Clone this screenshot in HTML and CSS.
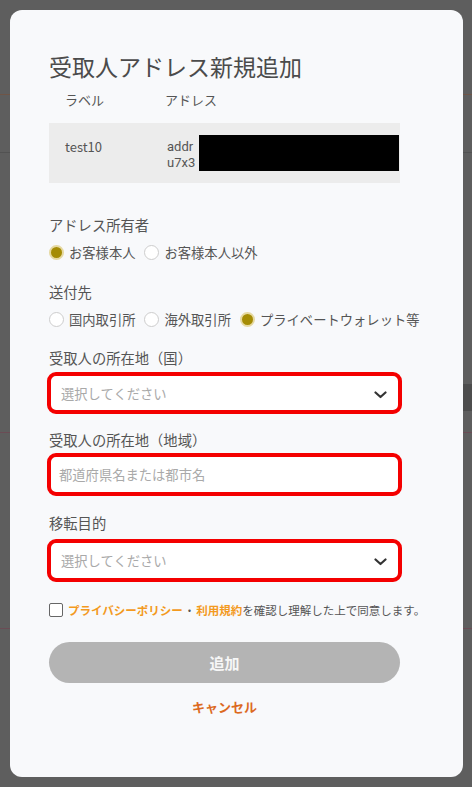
FILE: index.html
```html
<!DOCTYPE html>
<html lang="ja">
<head>
<meta charset="utf-8">
<title>受取人アドレス新規追加</title>
<link rel="stylesheet" href="styles.css">
</head>
<body>
<div class="overlay">
  <div class="modal">
    <h1 class="title">受取人アドレス新規追加</h1>
    <div class="addr-table">
      <div class="addr-head">
        <span class="col-label">ラベル</span>
        <span class="col-addr">アドレス</span>
      </div>
      <div class="addr-row">
        <span class="col-label">test10</span>
        <span class="col-addr addr-val">addr<br>u7x3</span>
        <span class="redact"></span>
      </div>
    </div>

    <div class="field-label sec-owner">アドレス所有者</div>
    <div class="radio-row">
      <label class="radio"><span class="radio-dot on"></span>お客様本人</label>
      <label class="radio"><span class="radio-dot"></span>お客様本人以外</label>
    </div>

    <div class="field-label sec-dest">送付先</div>
    <div class="radio-row">
      <label class="radio"><span class="radio-dot"></span>国内取引所</label>
      <label class="radio"><span class="radio-dot"></span>海外取引所</label>
      <label class="radio"><span class="radio-dot on"></span>プライベートウォレット等</label>
    </div>

    <div class="field-label sec-country">受取人の所在地（国）</div>
    <div class="select h42">
      <span>選択してください</span>
      <svg class="chev" width="13" height="8" viewBox="0 0 13 8"><path d="M1.5 1.5 L6.5 6 L11.5 1.5" fill="none" stroke="#333" stroke-width="2.2" stroke-linecap="round" stroke-linejoin="round"/></svg>
    </div>

    <div class="field-label sec-region">受取人の所在地（地域）</div>
    <div class="select input h43">
      <span>都道府県名または都市名</span>
    </div>

    <div class="field-label sec-purpose">移転目的</div>
    <div class="select h43 purpose">
      <span>選択してください</span>
      <svg class="chev" width="13" height="8" viewBox="0 0 13 8"><path d="M1.5 1.5 L6.5 6 L11.5 1.5" fill="none" stroke="#333" stroke-width="2.2" stroke-linecap="round" stroke-linejoin="round"/></svg>
    </div>

    <div class="check-row">
      <span class="checkbox"></span>
      <span class="check-text"><span class="link">プライバシーポリシー</span><span class="dot">・</span><span class="link">利用規約</span>を確認し理解した上で同意します。</span>
    </div>

    <div class="btn-add">追加</div>
    <div class="cancel">キャンセル</div>
  </div>
</div>
</body>
</html>
```

FILE: styles.css
```css
html, body {
  margin: 0;
  padding: 0;
}
body {
  width: 472px;
  height: 787px;
  overflow: hidden;
  font-family: "Noto Sans CJK JP", "Noto Sans", sans-serif;
  background:
    linear-gradient(#6f5547, #6f5547) 0 94px / 100% 1px no-repeat,
    linear-gradient(#525252, #525252) 0 152px / 100% 1px no-repeat,
    linear-gradient(#4d4d4d, #4d4d4d) 300px 384px / 172px 27px no-repeat,
    linear-gradient(#6b4c55, #6b4c55) 0 432px / 100% 1px no-repeat,
    linear-gradient(#6b4c55, #6b4c55) 0 628px / 100% 1px no-repeat,
    #5e5e5e;
}
.overlay {
  padding: 10px 9px 10px 10px;
}
.modal {
  height: 767px;
  box-sizing: border-box;
  background: #f8f9fb;
  border-radius: 12px;
  padding: 40px 63px 0 39px;
}
.title {
  margin: 0;
  font-size: 23px;
  font-weight: 400;
  line-height: 32px;
  color: #4b4b4b;
  white-space: nowrap;
}
.addr-head {
  display: flex;
  padding: 9px 0 14px 16px;
  font-size: 13px;
  line-height: 18px;
  color: #555;
}
.col-label {
  width: 100px;
  flex: none;
}
.addr-row {
  position: relative;
  display: flex;
  align-items: flex-start;
  height: 60px;
  box-sizing: border-box;
  background: #ececec;
  padding: 16px 0 0 16px;
  font-size: 13px;
  line-height: 15.5px;
  color: #555;
  overflow: hidden;
}
.addr-val {
  padding-left: 2px;
  white-space: nowrap;
  font-family: Roboto, "Noto Sans", sans-serif;
}
.redact {
  position: absolute;
  left: 150px;
  top: 12px;
  width: 200px;
  height: 36px;
  background: #000;
}
.field-label {
  font-size: 14.3px;
  line-height: 20px;
  color: #555;
  white-space: nowrap;
}
.sec-owner { margin-top: 32px; }
.sec-dest { margin-top: 20px; }
.sec-country { margin-top: 19px; }
.sec-region { margin-top: 16px; }
.sec-purpose { margin-top: 17px; }

.radio-row {
  display: flex;
  align-items: center;
  height: 20px;
  margin-top: 7px;
  font-size: 13.3px;
  color: #555;
  white-space: nowrap;
}
.radio {
  display: flex;
  align-items: center;
  gap: 5px;
  margin-right: 9px;
}
.radio-dot {
  width: 15px;
  height: 15px;
  box-sizing: border-box;
  border-radius: 50%;
  border: 1px solid #cdcdcd;
  background: #fff;
  flex: none;
}
.radio-dot.on {
  border: 2px solid #e6d9a2;
  background: #a58c05;
}
.select {
  display: flex;
  align-items: center;
  justify-content: space-between;
  margin: 4px -2px 0;
  box-sizing: border-box;
  border: 4px solid #f40000;
  border-radius: 9px;
  background: #fff;
  padding: 0 11px 0 10px;
  font-size: 13.3px;
  color: #a9a9a9;
  white-space: nowrap;
}
.select.input {
  margin-top: 3px;
  padding-left: 8px;
}
.select.purpose {
  margin-top: 6px;
}
.h42 { height: 42px; }
.h43 { height: 43px; }
.chev {
  display: block;
  margin-top: 3px;
}
.check-row {
  display: flex;
  align-items: center;
  gap: 5px;
  margin-top: 20px;
  height: 16px;
  font-size: 11.5px;
  line-height: 16px;
  color: #555;
  white-space: nowrap;
}
.checkbox {
  width: 14px;
  height: 14px;
  box-sizing: border-box;
  border: 1.5px solid #666;
  border-radius: 2px;
  background: #fff;
  flex: none;
}
.link {
  color: #f39a1e;
  font-weight: 700;
}
.dot {
  padding: 0 1px;
}
.btn-add {
  display: flex;
  align-items: center;
  justify-content: center;
  margin-top: 24px;
  height: 41px;
  border-radius: 21px;
  background: #b4b4b4;
  color: #f7f7f7;
  font-size: 15px;
  font-weight: 700;
}
.cancel {
  margin-top: 15px;
  text-align: center;
  color: #dc6a1f;
  font-size: 13px;
  font-weight: 700;
  line-height: 18px;
}
```
